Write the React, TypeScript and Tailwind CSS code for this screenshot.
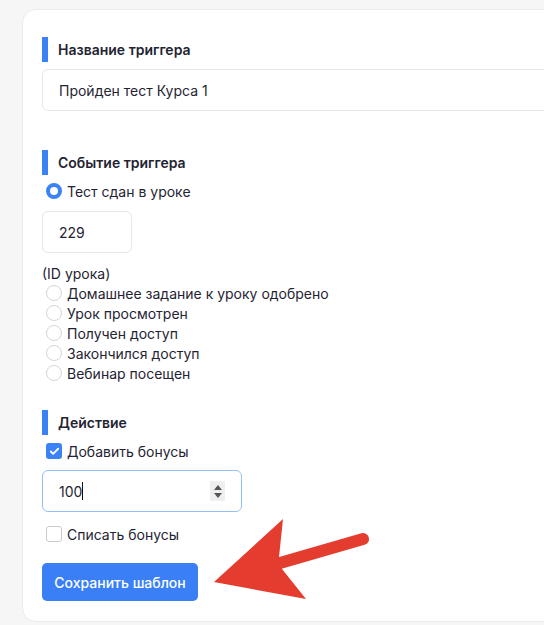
import { Check } from 'lucide-react';

function SectionTitle({ title }: { title: string }) {
    return (
        <div className="flex items-center h-[25px]">
            <div className="w-[6px] h-[25px] bg-[#3b82f6]" />
            <span className="ml-[10px] text-[14px] font-semibold text-[#1f2433]">{title}</span>
        </div>
    );
}

function Radio({ label, checked }: { label: string; checked?: boolean }) {
    return (
        <div className="flex items-center h-[20px] pl-[4px]">
            {checked ? (
                <span className="w-[16px] h-[16px] rounded-full border-[4px] border-[#3b82f6] bg-white" />
            ) : (
                <span className="w-[16px] h-[16px] rounded-full border border-[#d4d6da] bg-white" />
            )}
            <span className="ml-[5px] text-[14px] text-[#1f2433]">{label}</span>
        </div>
    );
}

function Checkbox({ label, checked }: { label: string; checked?: boolean }) {
    return (
        <div className="flex items-center h-[20px] pl-[4px]">
            {checked ? (
                <span className="w-[16px] h-[16px] rounded-[3px] bg-[#3b82f6] flex items-center justify-center">
                    <Check size={11} strokeWidth={4} className="text-white" />
                </span>
            ) : (
                <span className="w-[16px] h-[16px] rounded-[3px] border border-[#c9cbd0] bg-white" />
            )}
            <span className="ml-[5px] text-[14px] text-[#1f2433]">{label}</span>
        </div>
    );
}

export default function App() {
    return (
        <div
            className="relative w-[544px] h-[625px] overflow-hidden bg-[#f6f6f7]"
            style={{ fontFamily: 'Inter, "Noto Sans", sans-serif' }}
        >
            <div className="ml-[22px] mt-[9px] w-[620px] h-[613px] bg-white rounded-[14px] border border-[#ececf0] pl-[19px] pt-[27px]">
                <SectionTitle title="Название триггера" />
                <div className="mt-[7px] h-[42px] w-[600px] rounded-[6px] border border-[#e6e7eb] flex items-center pl-[16px] text-[14px] text-[#1f2433]">
                    Пройден тест Курса 1
                </div>

                <div className="mt-[39px]">
                    <SectionTitle title="Событие триггера" />
                </div>
                <div className="mt-[6px]">
                    <Radio label="Тест сдан в уроке" checked />
                </div>
                <div className="mt-[10px] h-[42px] w-[90px] rounded-[6px] border border-[#e6e7eb] flex items-center pl-[16px] text-[14px] text-[#1f2433]">
                    229
                </div>
                <div className="mt-[10px] h-[20px] flex items-center text-[14px] text-[#1f2433]">(ID урока)</div>
                <Radio label="Домашнее задание к уроку одобрено" />
                <Radio label="Урок просмотрен" />
                <Radio label="Получен доступ" />
                <Radio label="Закончился доступ" />
                <Radio label="Вебинар посещен" />

                <div className="mt-[27px]">
                    <SectionTitle title="Действие" />
                </div>
                <div className="mt-[6px]">
                    <Checkbox label="Добавить бонусы" checked />
                </div>
                <div className="mt-[9px] h-[42px] w-[200px] rounded-[6px] border border-[#93c0f5] flex items-center pl-[16px] pr-[16px] text-[14px] text-[#1f2433]">
                    <span>100</span>
                    <span className="w-px h-[18px] bg-[#111]" />
                    <span className="ml-auto w-[15px] h-[20px] bg-[#efefef] flex flex-col items-center justify-center gap-[3px]">
                        <span className="w-0 h-0 border-l-[4px] border-r-[4px] border-b-[5px] border-l-transparent border-r-transparent border-b-[#555]" />
                        <span className="w-0 h-0 border-l-[4px] border-r-[4px] border-t-[5px] border-l-transparent border-r-transparent border-t-[#555]" />
                    </span>
                </div>
                <div className="mt-[12px]">
                    <Checkbox label="Списать бонусы" />
                </div>
                <button className="mt-[19px] h-[38px] w-[156px] rounded-[5px] bg-[#3a7ff6] text-white text-[14px] font-medium">
                    Сохранить шаблон
                </button>
            </div>

            <svg className="absolute left-0 top-0 pointer-events-none" width="544" height="625" viewBox="0 0 544 625">
                <line x1="280" y1="563" x2="363" y2="539" stroke="#e43d30" strokeWidth="12" strokeLinecap="round" />
                <polygon points="214,582 283,519 279,557 282,569 306,599" fill="#e43d30" />
            </svg>
        </div>
    );
}
